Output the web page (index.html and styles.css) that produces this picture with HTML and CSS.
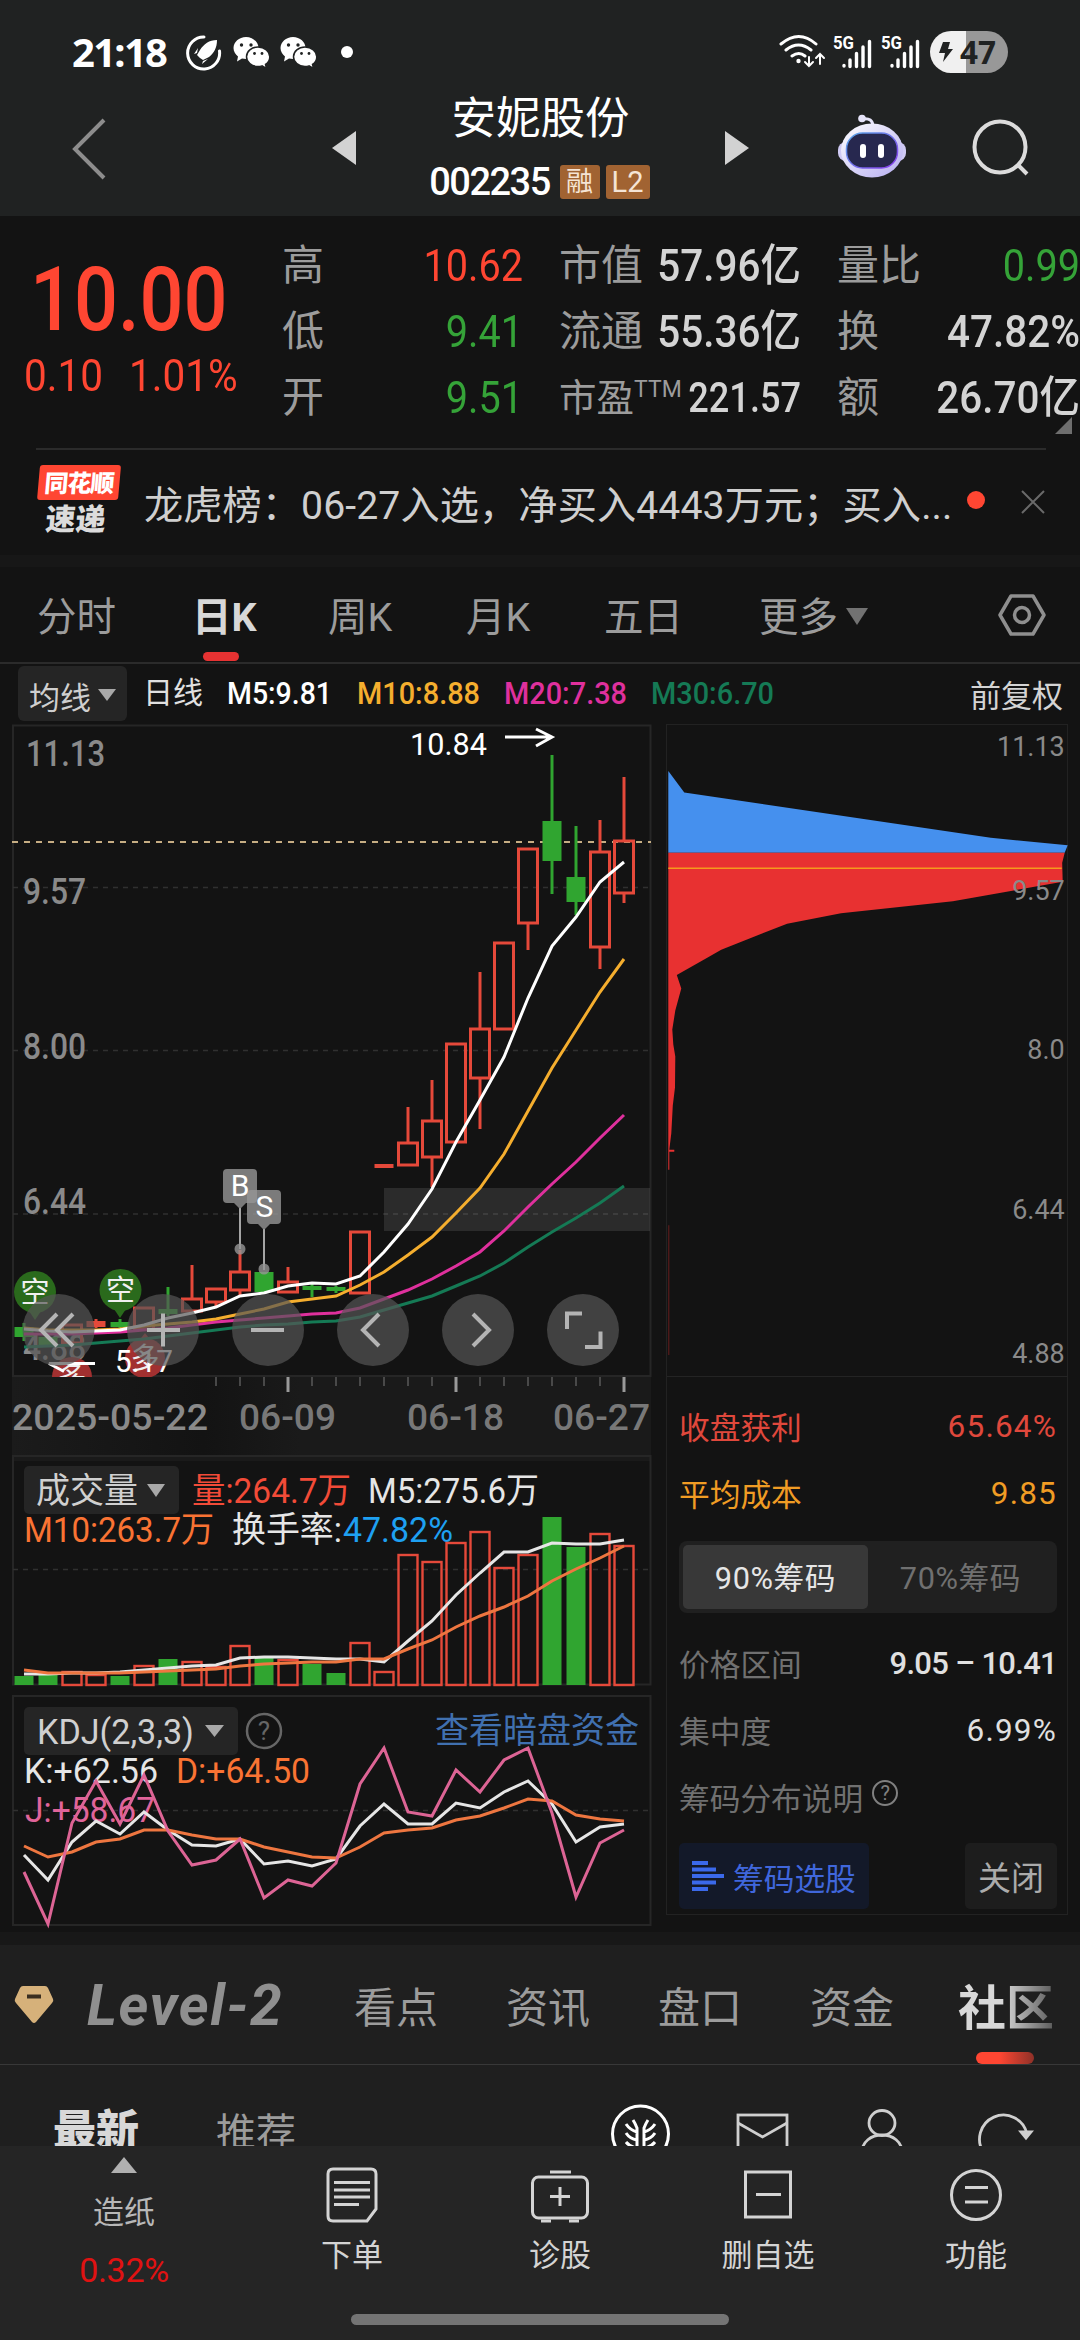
FILE: index.html
```html
<!DOCTYPE html>
<html lang="zh-CN">
<head>
    <meta charset="UTF-8">
    <meta name="viewport" content="width=device-width, initial-scale=1.0">
    <title>安妮股份 002235</title>
    <link rel="stylesheet" href="styles.css">
</head>
<body>
    <header class="top">
        <div class="status-bar">
            <span class="time">21:18</span>
            <svg class="status-left" width="168" height="40" viewBox="186 32 168 40">
                <path d="M204 37a16 16 0 1 0 15.500 14" fill="none" stroke="#fff" stroke-width="3" stroke-linecap="round"/>
                <path d="M217 40c-8 0-13 4-17 10l-3 5 3 3 3 2 6-3c5-4 8-9 8-17zM197 53l-3 1 4-6zM203 61l-1 3 6-5z" fill="#fff"/>
                <g id="wechat">
                    <path d="M246 37c-7 0-12.500 5-12.500 11 0 3.500 2 6.500 4.500 8.500l-1 5 5-3 4 .6c7 0 12.500-5 12.500-11S253 37 246 37z" fill="#fff"/>
                    <path d="M258 47c-6.500 0-11.500 4.300-11.500 9.700S251.500 66.500 258 66.500c1.300 0 2.800-.2 4-.6l4.500 2.500-1-4c2.700-1.700 4.300-4.500 4.300-7.700 0-5.400-5.300-9.700-11.800-9.700z" fill="#fff" stroke="#202222" stroke-width="1.500"/>
                    <g fill="#202222"><circle cx="241.500" cy="45" r="1.700"/><circle cx="251" cy="45" r="1.700"/><circle cx="254.500" cy="53.500" r="1.400"/><circle cx="262" cy="53.500" r="1.400"/></g>
                </g>
                <use href="#wechat" x="47"/>
                <circle cx="347" cy="52" r="6" fill="#fff"/>
            </svg>
            <svg class="status-right" width="230" height="44" viewBox="779 30 230 44">
                <g fill="none" stroke="#fff" stroke-width="3" stroke-linecap="round">
                    <path d="M781 44q18-15 35 0M786 50q12.500-10 25 0M792 56q7-5 13 0"/>
                    <path d="M809 57v9m-4-4l4 4 4-4M820 64v-10m-4 4l4-4 4 4" stroke-width="2"/>
                </g>
                <circle cx="798.500" cy="61" r="2.200" fill="#fff"/>
                <g id="signal">
                    <text x="833" y="49" class="five-g" textLength="21" lengthAdjust="spacingAndGlyphs">5G</text>
                    <path d="M844 65.500v.5M850 60v6.500M856.500 53.500v13M863 47v19.500M869.500 41.500v25" stroke="#fff" stroke-width="3.400" stroke-linecap="round"/>
                </g>
                <use href="#signal" x="48"/>
                <path d="M966 31h-15a21 21 0 0 0 0 42h15z" fill="#f0f0f0"/>
                <path d="M966 31h21a21 21 0 0 1 0 42h-21z" fill="#989898"/>
                <path d="M943 42h7l-2 7h5l-10 13 2-9h-6z" fill="#202222"/>
                <text x="960" y="64" class="battery" textLength="36" lengthAdjust="spacingAndGlyphs">47</text>
            </svg>
        </div>
        <div class="title-bar">
            <svg class="back" width="40" height="66" viewBox="70 115 40 66"><path d="M104 120L75 149l29 29" fill="none" stroke="#8d8d8d" stroke-width="4"/></svg>
            <svg class="prev" width="24" height="36" viewBox="0 0 24 36"><path d="M24 1v34L0 18z" fill="#d2d2d2"/></svg>
            <div class="stock">
                <div class="name">安妮股份</div>
                <div class="code"><span>002235</span><i>融</i><i>L2</i></div>
            </div>
            <svg class="next" width="24" height="36" viewBox="0 0 24 36"><path d="M0 1v34l24-17z" fill="#d2d2d2"/></svg>
            <svg class="robot" width="70" height="66" viewBox="835 113 70 66">
                <defs>
                    <linearGradient id="shell" x1="0" y1="0" x2="1" y2="1"><stop offset="0" stop-color="#fff"/><stop offset="1" stop-color="#b5adf0"/></linearGradient>
                    <linearGradient id="rim" x1="0" y1="0" x2="1" y2="1"><stop offset="0" stop-color="#58a8e8"/><stop offset="1" stop-color="#8a3bef"/></linearGradient>
                </defs>
                <path d="M860 119q11-2 11 8" fill="none" stroke="#e6e4fa" stroke-width="3"/>
                <circle cx="860" cy="118.500" r="3.800" fill="#e6e4fa"/>
                <rect x="836" y="142" width="68" height="19" rx="8" fill="#cfcaf4"/>
                <ellipse cx="870" cy="150.500" rx="31" ry="27" fill="url(#shell)"/>
                <rect x="844.500" y="133" width="51" height="35" rx="16" fill="#27284f" stroke="url(#rim)" stroke-width="1.500"/>
                <rect x="858" y="144" width="6" height="14" rx="3" fill="#fff"/><rect x="876" y="144" width="6" height="14" rx="3" fill="#fff"/>
            </svg>
            <svg class="search" width="60" height="60" viewBox="969 118 60 60"><circle cx="998" cy="147" r="25.500" fill="none" stroke="#dcdcdc" stroke-width="4"/><path d="M1015 164l10 10" stroke="#dcdcdc" stroke-width="4"/></svg>
        </div>
    </header>

    <section class="quote">
        <div class="price">
            <div class="last"><span>10.00</span></div>
            <div class="change"><span>0.10</span><span>1.01%</span></div>
        </div>
        <dl class="col col-a">
            <dt>高</dt><dd class="up">10.62</dd>
            <dt>低</dt><dd class="down">9.41</dd>
            <dt>开</dt><dd class="down">9.51</dd>
        </dl>
        <dl class="col col-b">
            <dt>市值</dt><dd>57.96亿</dd>
            <dt>流通</dt><dd>55.36亿</dd>
            <dt class="ttm">市盈<sup>TTM</sup></dt><dd class="pe">221.57</dd>
        </dl>
        <dl class="col col-c">
            <dt>量比</dt><dd class="down">0.99</dd>
            <dt>换</dt><dd>47.82%</dd>
            <dt>额</dt><dd>26.70亿</dd>
        </dl>
        <div class="corner"></div>
    </section>

    <section class="news">
        <div class="news-logo"><b>同花顺</b><em>速递</em></div>
        <p>龙虎榜：06-27入选，净买入4443万元；买入...</p>
        <span class="dot"></span>
        <svg width="26" height="26" viewBox="0 0 26 26"><path d="M2 2l22 22M24 2L2 24" stroke="#6a6a6a" stroke-width="2"/></svg>
    </section>

    <nav class="periods">
        <a>分时</a>
        <a class="active">日K</a>
        <a>周K</a>
        <a>月K</a>
        <a>五日</a>
        <a class="more">更多</a>
        <svg width="48" height="48" viewBox="-24 -24 48 48" fill="none" stroke="#8f8f8f" stroke-width="3.500"><path d="M-11-19h22l11 19-11 19h-22L-22 0z" stroke-linejoin="round"/><circle r="7.500"/></svg>
    </nav>

    <div class="legend">
        <button class="select">均线<i></i></button>
        <span class="daily">日线</span>
        <svg width="570" height="40" viewBox="220 673 570 40" class="num">
            <text x="227" y="704" textLength="105" fill="#fff">M5:9.81</text>
            <text x="357" y="704" textLength="123" fill="#f5ae2e">M10:8.88</text>
            <text x="504" y="704" textLength="123" fill="#df309d">M20:7.38</text>
            <text x="651" y="704" textLength="123" fill="#157a55">M30:6.70</text>
        </svg>
        <span class="adjust">前复权</span>
    </div>

    <main class="charts">
        <div class="left">
            <svg id="kline" width="660" height="731" viewBox="0 724 660 731">
                <defs>
                    <linearGradient id="axisfade"><stop offset="0" stop-color="#1b1b1b"/><stop offset=".3" stop-color="#131313"/><stop offset=".45" stop-color="#1a1a1a"/></linearGradient>
                    <clipPath id="kclip"><rect x="12" y="724" width="639" height="653"/></clipPath>
                </defs>
                <rect x="12" y="1377" width="639" height="78" fill="url(#axisfade)"/>
                <path class="frame" d="M13 725.500H650.500V1376H13z"/>
                <path class="grid" d="M13 887.500H650M13 1050.500H650M13 1214H650"/>
                <rect x="384" y="1188" width="266" height="43" fill="#fff" opacity=".1"/>
                <path d="M12 842H651" stroke="#c6ad83" stroke-width="2" stroke-dasharray="6 6"/>
                <g class="num axis">
                    <text x="26" y="766" textLength="79">11.13</text>
                    <text x="23" y="904" textLength="63">9.57</text>
                    <text x="23" y="1059" textLength="63">8.00</text>
                    <text x="23" y="1214" textLength="63">6.44</text>
                    <text x="23" y="1360" textLength="63">4.88</text>
                </g>
                <g clip-path="url(#kclip)">
                    <g class="pin">
                        <path d="M27 1308l8 12 8-12z" fill="#2a6a1c"/><circle cx="35" cy="1292" r="21" fill="#2a6a1c"/><text x="35" y="1303">空</text>
                        <path d="M112 1306l8 12 8-12z" fill="#2a6a1c"/><circle cx="120.500" cy="1290" r="21" fill="#2a6a1c"/><text x="120.500" y="1301">空</text>
                        <circle cx="145" cy="1358" r="20" fill="#a23030"/><path d="M138 1342l7-9 7 9z" fill="#a23030"/><text x="145" y="1369">多</text>
                        <circle cx="72" cy="1377" r="20" fill="#a23030"/><text x="72" y="1388">多</text>
                    </g>
                    <g id="candles"></g>
                    <g id="averages"></g>
                </g>
                <g class="flag">
                    <path d="M240 1208v41M264 1229v41" stroke="#a5a5a5" stroke-width="2"/>
                    <circle cx="240" cy="1249" r="5.500"/><circle cx="264" cy="1269" r="5.500"/>
                    <path d="M227 1169h26q4 0 4 4v26q0 4-4 4h-7l-6 6-6-6h-7q-4 0-4-4v-26q0-4 4-4z"/>
                    <path d="M251 1190h26q4 0 4 4v26q0 4-4 4h-7l-6 6-6-6h-7q-4 0-4-4v-26q0-4 4-4z"/>
                    <text x="240" y="1196">B</text><text x="264.500" y="1217">S</text>
                </g>
                <g class="num mark">
                    <text x="410" y="755" textLength="77">10.84</text>
                    <text x="115" y="1372" textLength="58">5.17</text>
                    <path d="M505 737h46M536 729l16 8-16 9M95 1363.500H49l15 8" fill="none" stroke="#fff" stroke-width="3"/>
                </g>
                <g class="tools">
                    <circle cx="58.500" cy="1330" r="36"/><circle cx="163" cy="1330" r="36"/><circle cx="268" cy="1330" r="36"/>
                    <circle cx="373" cy="1330" r="36"/><circle cx="478" cy="1330" r="36"/><circle cx="583" cy="1330" r="36"/>
                    <path d="M57 1314l-16 16 16 16M73 1314l-16 16 16 16M147 1330h33M163 1313.500v33M251 1330h33M379 1314l-16 16 16 16M473 1314l16 16-16 16M567 1329v-15.500h15M585 1347h15.500v-15.500"/>
                </g>
                <g id="ticks"></g>
                <g class="num axis">
                    <text x="12" y="1430" textLength="196">2025-05-22</text>
                    <text x="239" y="1430" textLength="97" fill-opacity=".85">06-09</text>
                    <text x="407" y="1430" textLength="97" fill-opacity=".85">06-18</text>
                    <text x="553" y="1430" textLength="97" fill-opacity=".85">06-27</text>
                </g>
            </svg>

            <svg id="volume" width="660" height="239" viewBox="0 1455 660 239">
                <rect x="12" y="1455" width="639" height="6" fill="#1a1a1a"/>
                <path class="frame" d="M13 1456H650.500V1684.500H13z"/>
                <path class="grid" d="M13 1569.500H650"/>
                <rect x="24" y="1466" width="155" height="48" rx="5" fill="#252525"/>
                <path d="M147 1484h18l-9 13z" fill="#a8a8a8"/>
                <g class="num">
                    <text x="36" y="1503" textLength="102" fill="#d0d0d0">成交量</text>
                    <text x="192" y="1503" textLength="159" fill="#f24b38">量:264.7万</text>
                    <text x="368" y="1503" textLength="171" fill="#e6e6e6">M5:275.6万</text>
                    <text x="24" y="1542" textLength="190" fill="#fa7333">M10:263.7万</text>
                    <text x="232" y="1542" textLength="110" fill="#e6e6e6">换手率:</text>
                    <text x="343" y="1542" textLength="110" fill="#1ea0f2">47.82%</text>
                </g>
                <g id="bars"></g>
            </svg>

            <svg id="kdj" width="660" height="238" viewBox="0 1694 660 238">
                <path class="frame" d="M13 1696H650.500V1925H13z"/>
                <path class="grid" d="M13 1810.500H650"/>
                <rect x="24" y="1707" width="214" height="48" rx="5" fill="#252525"/>
                <path d="M205 1725h19l-9.500 12z" fill="#a8a8a8"/>
                <circle cx="264" cy="1731" r="17" fill="none" stroke="#666" stroke-width="2.500"/>
                <text class="ask" x="264" y="1740">?</text>
                <g class="num">
                    <text x="37" y="1744" textLength="157" fill="#d0d0d0">KDJ(2,3,3)</text>
                    <text x="435" y="1743" textLength="204" fill="#4070b0">查看暗盘资金</text>
                    <text x="24" y="1783" textLength="134" fill="#e6e6e6">K:+62.56</text>
                    <text x="176" y="1783" textLength="134" fill="#fa7333">D:+64.50</text>
                    <text x="25" y="1822" textLength="130" fill="#e0649a">J:+58.67</text>
                </g>
            </svg>
        </div>

        <aside class="chips">
            <svg width="401" height="652" viewBox="666 724 401 652">
                <path d="M667 770l16 21.500 307 45.500 77 7.500-3 7.500H667z" fill="#4590ee"/>
                <path d="M667 852h397l-2.500 10 .5 19-110 19.500-112 12-54 10.500-66 26-14 8-30.500 17.500 4.500 13.500-6 22-3 19 1 15 2 12-.3 31-2.200 18-1.500 28-2 16.500h5v2h-5v18h-1z" fill="#e83131"/>
                <path d="M667.500 1225v130" stroke="#8a2020" opacity=".7"/>
                <path d="M667 867.500h394" stroke="#f59a1c" stroke-width="1.500"/>
                <g class="chip-axis">
                    <text x="1064" y="755">11.13</text>
                    <text x="1064" y="899">9.57</text>
                    <text x="1064" y="1059">8.0</text>
                    <text x="1064" y="1219">6.44</text>
                    <text x="1064" y="1363">4.88</text>
                </g>
            </svg>
            <div class="chip-info">
                <div class="row red"><span>收盘获利</span><b>65.64%</b></div>
                <div class="row orange"><span>平均成本</span><b>9.85</b></div>
                <div class="toggle"><span class="on">90%筹码</span><span>70%筹码</span></div>
                <div class="row"><span>价格区间</span><b class="range">9.05 – 10.41</b></div>
                <div class="row"><span>集中度</span><b>6.99%</b></div>
                <div class="row"><span>筹码分布说明</span><i class="help">?</i></div>
                <div class="actions">
                    <button class="pick"><svg width="32" height="30" viewBox="0 0 32 30"><path d="M0 2h16M0 8.500h24M0 15h32M0 21.500h24M0 28h16" stroke="#3b69ea" stroke-width="4"/></svg>筹码选股</button>
                    <button class="close">关闭</button>
                </div>
            </div>
        </aside>
    </main>

    <nav class="sections">
        <svg width="40" height="38" viewBox="0 0 40 38"><path d="M9 0h22q2 0 3 2l5 11q1 2-1 4L22 36q-2 2-4 0L2 17q-2-2-1-4L6 2q1-2 3-2z" fill="#d6b17a"/><path d="M13 10.500h14" stroke="#3a2e20" stroke-width="4"/></svg>
        <a class="level">Level-2</a>
        <a>看点</a>
        <a>资讯</a>
        <a>盘口</a>
        <a>资金</a>
        <a class="current">社区</a>
    </nav>

    <div class="feed">
        <a class="newest">最新</a>
        <a class="recommend">推荐</a>
        <svg width="430" height="60" viewBox="606 2100 430 60" fill="none" stroke="#cfcfcf" stroke-width="2.800">
            <g stroke="#fff" stroke-width="3"><circle cx="639.500" cy="2134" r="28"/><path d="M636 2150v-22q-2-5-4-8M636 2132q-7-2-11-8M636 2140q-7-1-11-7M636 2148q-7-1-11-6M643 2150v-22q2-5 4-8M643 2132q7-2 11-8M643 2140q7-1 11-7M643 2148q7-1 11-6"/></g>
            <rect x="737" y="2115" width="49" height="44"/><path d="M737 2123l24.500 14 24.500-14"/>
            <ellipse cx="881" cy="2123" rx="13" ry="12.500"/><path d="M861 2152c0-10 9-17 20-17s20 7 20 17"/>
            <path d="M983 2153a24 24 0 1 1 43-19"/><path d="M1020 2132h10l-5 6z" fill="#cfcfcf"/>
        </svg>
    </div>

    <footer class="bottom">
        <div class="tabs">
            <div class="index"><i></i><span>造纸</span><b>0.32%</b></div>
            <div class="tab">
                <svg width="60" height="60" viewBox="0 0 60 60"><path d="M11 4h38q5 0 5 5v35l-9 12H11q-5 0-5-5V9q0-5 5-5zM12 17.500h36M12 25h36M12 32h36M12 39.500h25"/></svg>
                <span>下单</span>
            </div>
            <div class="tab">
                <svg width="60" height="60" viewBox="0 0 60 60"><rect x="2.500" y="12" width="55" height="41" rx="6"/><path d="M20 7h21M20 31.500h20M30 22v19M11 56h10M39 56h10"/></svg>
                <span>诊股</span>
            </div>
            <div class="tab">
                <svg width="60" height="60" viewBox="0 0 60 60"><path d="M7.500 7h45v45h-45zM18 29.500h25"/></svg>
                <span>删自选</span>
            </div>
            <div class="tab">
                <svg width="60" height="60" viewBox="0 0 60 60"><circle cx="30" cy="30" r="24.500"/><path d="M19 22.500h23M19 37h23"/></svg>
                <span>功能</span>
            </div>
        </div>
        <div class="home"></div>
    </footer>

    <script src="chart.js"></script>
</body>
</html>
```
FILE: styles.css
```css
* {
    box-sizing: border-box;
}
body {
    margin: 0;
    width: 1080px;
    height: 2340px;
    overflow: hidden;
    background: #131313;
    color: #d4d4d4;
    font-family: Roboto, "Noto Sans CJK SC", sans-serif;
}
svg {
    display: block;
    flex: none;
}
button {
    border: none;
    padding: 0;
    font-family: inherit;
}
dl, dd, p {
    margin: 0;
}

/* header */
.top {
    height: 216px;
    background: #202222;
}
.status-bar {
    height: 100px;
    display: flex;
    padding: 30px 71px 0 72px;
}
.time {
    width: 114px;
    font: bold 40px/44px "Noto Sans", sans-serif;
    letter-spacing: -1.700px;
    color: #fff;
}
.status-left {
    margin-top: 2px;
}
.status-right {
    margin-left: auto;
}
.five-g {
    font: bold 18px Roboto, sans-serif;
    fill: #fff;
}
.battery {
    font: bold 33px "Noto Sans", sans-serif;
    fill: #202222;
}
.title-bar {
    display: flex;
    height: 116px;
    padding-left: 70px;
}
.back {
    margin-top: 15px;
}
.prev {
    margin: 30px 0 0 222px;
}
.stock {
    width: 369px;
    text-align: center;
    color: #fff;
}
.name {
    font-size: 44.500px;
    line-height: 60px;
    margin-top: -11px;
}
.code {
    display: flex;
    justify-content: center;
    align-items: center;
    margin-top: 13px;
    height: 40px;
}
.code span {
    width: 124px;
    margin-left: -4px;
    margin-right: 2px;
    font-size: 38px;
    font-weight: 500;
    letter-spacing: -1.500px;
}
.code i {
    height: 34px;
    width: 40px;
    border-radius: 3px;
    background: #a16332;
    color: #f5e4d5;
    font: 27px/34px Roboto, "Noto Sans CJK SC", sans-serif;
    margin-left: 6px;
}
.code i:last-child {
    width: 44px;
    font-size: 29px;
}
.next {
    margin-top: 30px;
}
.robot {
    margin: 13px 0 0 88px;
}
.search {
    margin: 18px 0 0 64px;
}

/* quote */
.quote {
    position: relative;
    height: 232px;
    padding-top: 16px;
    display: flex;
}
.up, .price {
    color: #ff4632;
}
.down {
    color: #35a338;
}
.price {
    width: 282px;
}
.last {
    height: 104px;
    padding: 16px 0 0 30px;
    font-size: 89px;
    line-height: 104px;
    font-weight: 500;
}
.last span, .change span {
    display: inline-block;
    transform: scaleX(.87);
    transform-origin: left;
}
.change {
    display: flex;
    padding: 15px 0 0 24px;
    font-size: 44px;
    line-height: 50px;
}
.change span {
    transform: scaleX(.92);
}
.change span:first-child {
    width: 105px;
}
.col {
    display: grid;
    grid-template-columns: max-content minmax(0, 1fr);
    grid-auto-rows: 66px;
    line-height: 68px;
    white-space: nowrap;
}
.col dt {
    font-size: 42px;
    color: #9c9c9c;
}
.col dd {
    display: flex;
    justify-content: flex-end;
    font-size: 44px;
    font-weight: 500;
    transform: scaleX(.92);
    transform-origin: right;
}
.col-a {
    width: 241px;
}
.col-b {
    width: 242px;
    margin-left: 36px;
}
.col-c {
    width: 243px;
    margin-left: 36px;
}
.col dd.up, .col dd.down {
    font-weight: 400;
    transform: scaleX(.9);
}
.col dd.pe {
    font-size: 42px;
    transform: scaleX(.86);
}
.ttm sup {
    font-size: 23px;
    line-height: 20px;
    vertical-align: 14px;
}
.col .ttm {
    font-size: 37.500px;
    width: 115px;
}
.corner {
    position: absolute;
    right: 8px;
    top: 201px;
    border-left: 17px solid transparent;
    border-bottom: 17px solid #6e6e6e;
}

/* news */
.news {
    height: 107px;
    margin: 0 34px 0 36px;
    border-top: 2px solid #2b2b2b;
    display: flex;
    align-items: center;
    font-size: 39.200px;
}
.news svg {
    margin-top: -2px;
}
.news-logo {
    width: 81px;
    margin: -5px 0 0 1px;
    transform: skewX(-5deg);
    text-align: center;
}
.news-logo b {
    display: block;
    height: 35px;
    border-radius: 3px;
    background: #ff4632;
    color: #fff;
    font: 900 24px/34px "Noto Sans CJK SC", sans-serif;
    letter-spacing: -1px;
}
.news-logo em {
    display: block;
    font: 900 30px/35px "Noto Sans CJK SC", sans-serif;
    color: #dcdcdc;
}
.news p {
    width: 820px;
    margin-left: 26px;
    margin-top: -2px;
    white-space: nowrap;
    color: #cfcfcf;
    letter-spacing: .1px;
}
.dot {
    width: 18px;
    height: 18px;
    margin: -6px 35px 0 4px;
    border-radius: 50%;
    background: #ff4632;
}

/* period tabs */
.periods {
    height: 109px;
    border-top: 12px solid #171717;
    border-bottom: 2px solid #2b2b2b;
    display: flex;
    line-height: 102px;
    font-size: 39.500px;
    color: #9c9c9c;
    padding-left: 37px;
    position: relative;
}
.periods a {
    width: 138px;
}
.periods a:first-child {
    width: 155px;
}
.periods a.active {
    width: 136px;
    position: relative;
    font-weight: bold;
    color: #d8d8d8;
}
.active::after {
    content: "";
    position: absolute;
    left: 11px;
    bottom: 1px;
    width: 36px;
    height: 9px;
    border-radius: 5px;
    background: #e63232;
}
.periods a.more {
    width: 238px;
    margin-left: 17px;
}
.more::after {
    content: "";
    display: inline-block;
    margin: 0 0 6px 8px;
    border: 11px solid transparent;
    border-top: 17px solid #727272;
    border-bottom: 0;
}
.periods svg {
    margin: 24px 0 0 1px;
}

/* moving average row */
.legend {
    height: 60px;
    display: flex;
    padding-left: 18px;
    align-items: flex-start;
    font-size: 30px;
}
.select {
    width: 109px;
    height: 55px;
    margin-top: 2px;
    background: #252525;
    color: #cfcfcf;
    font-size: 31px;
    border-radius: 6px;
    display: flex;
    align-items: center;
    justify-content: center;
    gap: 7px;
    padding-top: 3px;
}
.select i {
    border: 9px solid transparent;
    border-top: 12px solid #a8a8a8;
    border-bottom: 0;
}
.daily {
    line-height: 57px;
    margin-left: 16px;
    width: 77px;
    color: #e0e0e0;
}
.legend svg {
    margin-top: 9px;
}
.num text {
    font: 34px Roboto, "Noto Sans CJK SC", sans-serif;
}
#volume .num text, #kdj .num text {
    font-size: 35px;
}
.legend .num text {
    font-size: 32px;
    font-weight: 500;
}
.adjust {
    margin-left: auto;
    padding-right: 17px;
    line-height: 65px;
    font-size: 31px;
}

/* charts */
.charts {
    height: 1208px;
    display: flex;
}
.left {
    width: 666px;
}
.frame {
    fill: none;
    stroke: #262626;
    stroke-width: 2;
}
.grid {
    fill: none;
    stroke: #303030;
    stroke-width: 1.500;
    stroke-dasharray: 5 5;
}
.num.axis text {
    font-size: 36px;
    font-weight: 500;
    fill: #8a8a8a;
}
.num.mark text {
    font-size: 31px;
    fill: #fff;
}
.ask {
    font: 26px Roboto, sans-serif;
    fill: #666;
    text-anchor: middle;
}
.pin text {
    font: 29px "Noto Sans CJK SC", sans-serif;
    fill: #f0f0f0;
    text-anchor: middle;
}
.flag {
    fill: rgba(150, 150, 150, .8);
}
.flag text {
    font: 30px Roboto, sans-serif;
    fill: #fff;
    text-anchor: middle;
}
.tools circle {
    fill: rgba(85, 85, 85, .7);
}
.tools path {
    fill: none;
    stroke: #b4b4b4;
    stroke-width: 4;
}
.line {
    fill: none;
    stroke-width: 3;
}
.chips {
    width: 402px;
    height: 1191px;
    border: 1.500px solid #222;
}
.chips > svg {
    border-bottom: 1px solid #242424;
}
.chip-axis text {
    font: 27px Roboto, sans-serif;
    fill: #8a8a8a;
    text-anchor: end;
}
.chip-info {
    padding: 16px 10px 0 12px;
    font-size: 30.700px;
    color: #707070;
}
.row {
    height: 67px;
    display: flex;
    justify-content: space-between;
    align-items: center;
}
.row span {
    margin-top: -3px;
}
.row b {
    font-weight: 400;
    font-size: 31.500px;
    letter-spacing: 1.200px;
    color: #e0e0e0;
}
.row.red, .row.red b {
    color: #e0483c;
}
.row.orange, .row.orange b {
    color: #f09c24;
}
.row .range {
    font-weight: 500;
    font-size: 31px;
    letter-spacing: -.7px;
}
.toggle {
    height: 72px;
    margin: 14px 0 17px;
    padding: 4px;
    border-radius: 8px;
    background: #202020;
    display: flex;
    line-height: 67px;
    text-align: center;
    letter-spacing: .6px;
}
.toggle span {
    flex: 1;
    height: 64px;
    border-radius: 5px;
}
.toggle .on {
    background: #383838;
    color: #e6e6e6;
}
.row .help {
    width: 26px;
    height: 26px;
    border: 2px solid #808080;
    border-radius: 50%;
    font: 20px/22px Roboto, sans-serif;
    text-align: center;
    margin: -9px auto 0 9px;
    color: #808080;
}
.actions {
    display: flex;
    justify-content: space-between;
    margin-top: 12px;
}
.actions button {
    height: 66px;
    border-radius: 5px;
}
.pick {
    width: 190px;
    display: flex;
    align-items: center;
    gap: 9px;
    padding-left: 13px !important;
    background: #131929;
    color: #4067dc;
    font-size: 30.700px;
}
.close {
    width: 92px;
    background: #1d1d1d;
    color: #ababab;
    font-size: 33px;
}

/* section tabs */
.sections {
    height: 133px;
    border-top: 13px solid #181818;
    border-bottom: 1px solid #383838;
    background: #1f1f1f;
    display: flex;
    line-height: 127px;
    font-size: 42px;
    color: #9c9c9c;
    padding-left: 14px;
}
.sections svg {
    margin-top: 41px;
}
.sections a {
    width: 152px;
}
.sections a.level {
    width: 267px;
    margin-left: 33px;
    font: italic bold 57px/121px Roboto, sans-serif;
    color: #8f8f8f;
    letter-spacing: 1.600px;
}
.sections a.current {
    width: 98px;
    margin-left: -4px;
    font-size: 48px;
    font-weight: bold;
    position: relative;
    background: linear-gradient(90deg, #d8d8d8 45%, #555);
    -webkit-background-clip: text;
    color: transparent;
}
.current::after {
    content: "";
    position: absolute;
    left: 18px;
    bottom: 0;
    width: 58px;
    height: 12px;
    border-radius: 6px;
    background: linear-gradient(90deg, #ff4632 40%, #8e3128);
}

.feed {
    height: 81px;
    overflow: hidden;
    background: #1f1f1f;
    display: flex;
    padding-left: 53px;
    line-height: 132px;
}
.newest {
    width: 163px;
    font-size: 43px;
    font-weight: 900;
    color: #d8d8d8;
}
.recommend {
    width: 391px;
    font-size: 40px;
    line-height: 138px;
    color: #9c9c9c;
}
.feed svg {
    margin-top: 35px;
}

/* bottom bar */
.bottom {
    height: 194px;
    background: #252525;
}
.tabs {
    height: 168px;
    display: flex;
}
.index {
    width: 248px;
    display: flex;
    flex-direction: column;
    align-items: center;
    font-size: 31px;
    color: #b8b8b8;
}
.index i {
    margin-top: 11px;
    border: 13px solid transparent;
    border-bottom: 16px solid #b0b0b0;
    border-top: 0;
}
.index span {
    line-height: 46px;
    margin-top: 17px;
}
.index b {
    font-size: 34px;
    font-weight: 400;
    line-height: 40px;
    margin-top: 14px;
    color: #e01212;
    letter-spacing: -.3px;
}
.tab {
    width: 208px;
    padding-top: 19px;
    display: flex;
    flex-direction: column;
    align-items: center;
    font-size: 31px;
    line-height: 46px;
    color: #d4d4d4;
}
.tab svg {
    fill: none;
    stroke: #d4d4d4;
    stroke-width: 3;
}
.tab span {
    margin-top: 8px;
}
.home {
    width: 378px;
    height: 11px;
    margin: 0 auto;
    border-radius: 6px;
    background: #747474;
}
```
FILE: chart.js
```js
const RED = '#e5493a';
const GREEN = '#30a530';

// direction, body top, body bottom, high, low, volume top
const days = [
    ['g', 1327, 1337, 1323, 1341, 1676],
    ['g', 1337, 1346, 1337, 1346, 1674],
    ['r', 1325, 1343, 1325, 1343, 1672],
    ['d', 1321, 1327, 1319, 1328, 1675],
    ['g', 1322, 1327, 1319, 1330, 1676],
    ['r', 1308, 1329, 1308, 1329, 1666],
    ['g', 1309, 1314, 1287, 1316, 1659],
    ['r', 1299, 1311, 1265, 1311, 1662],
    ['r', 1289, 1302, 1289, 1307, 1667],
    ['r', 1272, 1290, 1250, 1295, 1646],
    ['g', 1272, 1292, 1272, 1292, 1658],
    ['r', 1282, 1292, 1267, 1292, 1660],
    ['g', 1286, 1290, 1284, 1297, 1664],
    ['g', 1287, 1291, 1286, 1293, 1673],
    ['r', 1232, 1293, 1232, 1293, 1643],
    ['d', 1164, 1168, 1164, 1168, 1672],
    ['r', 1143, 1165, 1107, 1165, 1555],
    ['r', 1121, 1157, 1080, 1187, 1562],
    ['r', 1044, 1142, 1044, 1142, 1543],
    ['r', 1029, 1078, 972, 1129, 1532],
    ['r', 943, 1029, 943, 1029, 1568],
    ['r', 849, 923, 849, 950, 1555],
    ['g', 821, 861, 755, 894, 1517],
    ['g', 877, 902, 826, 915, 1547],
    ['r', 852, 947, 820, 969, 1534],
    ['r', 841, 893, 777, 903, 1546]
];

const x = i => 24 + i * 24;

function line(color, ys) {
    const points = ys.map((y, i) => x(i) + ',' + y).join(' ');
    return `<polyline class="line" stroke="${color}" points="${points}"/>`;
}

let candles = '';
let bars = '';
days.forEach(([dir, top, bottom, high, low, vol], i) => {
    const cx = x(i);
    const color = dir === 'g' ? GREEN : RED;
    if (high < top) candles += `<path d="M${cx} ${high}V${top}" stroke="${color}" stroke-width="3"/>`;
    if (low > bottom) candles += `<path d="M${cx} ${bottom}V${low}" stroke="${color}" stroke-width="3"/>`;
    if (dir === 'r') {
        candles += `<rect x="${cx - 9.5}" y="${top}" width="19" height="${bottom - top}" fill="none" stroke="${color}" stroke-width="3"/>`;
    } else {
        candles += `<rect x="${cx - 9.5}" y="${top}" width="19" height="${bottom - top}" fill="${color}"/>`;
    }
    if (dir === 'g') {
        bars += `<rect x="${cx - 9.5}" y="${vol}" width="19" height="${1685 - vol}" fill="${color}"/>`;
    } else {
        bars += `<rect x="${cx - 9.5}" y="${vol}" width="19" height="${1685 - vol}" fill="none" stroke="${color}" stroke-width="2.4"/>`;
    }
});
document.getElementById('candles').innerHTML = candles;

document.getElementById('averages').innerHTML =
    line('#157a55', [1347, 1346, 1345, 1343, 1341, 1339, 1336, 1333, 1330, 1327, 1325, 1324, 1322, 1321, 1317, 1310, 1303, 1296, 1286, 1276, 1263, 1247, 1232, 1218, 1203, 1186]) +
    line('#df309d', [1334, 1334, 1334, 1333, 1332, 1330, 1328, 1325, 1322, 1320, 1318, 1316, 1314, 1313, 1308, 1299, 1290, 1279, 1266, 1252, 1231, 1207, 1184, 1162, 1138, 1115]) +
    line('#f5ae2e', [1328, 1330, 1330, 1330, 1329, 1326, 1324, 1322, 1319, 1314, 1309, 1302, 1299, 1296, 1285, 1272, 1255, 1237, 1213, 1188, 1154, 1111, 1068, 1030, 992, 959]) +
    line('#fff', [1329, 1331, 1332, 1331, 1330, 1325, 1318, 1313, 1307, 1296, 1293, 1286, 1283, 1284, 1276, 1252, 1224, 1189, 1142, 1100, 1057, 998, 946, 917, 882, 862]);

document.getElementById('bars').innerHTML = bars +
    line('#e6e6e6', [1674, 1674, 1673, 1673, 1672, 1670, 1668, 1666, 1665, 1658, 1657, 1657, 1658, 1659, 1659, 1662, 1641, 1621, 1595, 1573, 1552, 1552, 1543, 1544, 1544, 1540]) +
    line('#ee7640', [1670, 1673, 1673, 1673, 1673, 1672, 1671, 1670, 1669, 1666, 1664, 1663, 1662, 1662, 1659, 1659, 1649, 1640, 1627, 1616, 1607, 1596, 1581, 1569, 1558, 1546]);

document.getElementById('kdj').insertAdjacentHTML('beforeend',
    line('#e6e6e6', [1855, 1880, 1842, 1821, 1834, 1812, 1830, 1845, 1846, 1839, 1864, 1861, 1866, 1859, 1826, 1804, 1824, 1824, 1803, 1808, 1792, 1781, 1804, 1842, 1827, 1824]) +
    line('#ee7640', [1846, 1857, 1852, 1842, 1839, 1830, 1830, 1835, 1839, 1839, 1847, 1852, 1857, 1858, 1847, 1833, 1830, 1828, 1820, 1816, 1808, 1799, 1801, 1815, 1819, 1821]) +
    line('#dd6495', [1872, 1924, 1823, 1781, 1824, 1775, 1831, 1865, 1860, 1839, 1898, 1880, 1886, 1863, 1784, 1748, 1812, 1816, 1770, 1792, 1760, 1748, 1813, 1897, 1843, 1830]));

// date axis
let ticks = '';
for (let i = 8; i < days.length; i++) {
    const major = (i - 11) % 7 === 0;
    ticks += `<path d="M${x(i)} 1377v${major ? 15 : 9}" stroke="${major ? '#999' : '#5a5a5a'}" stroke-width="${major ? 3 : 1.5}"/>`;
}
document.getElementById('ticks').innerHTML = ticks;

document.querySelectorAll('.num text[textLength]').forEach(t => t.setAttribute('lengthAdjust', 'spacingAndGlyphs'));
```
